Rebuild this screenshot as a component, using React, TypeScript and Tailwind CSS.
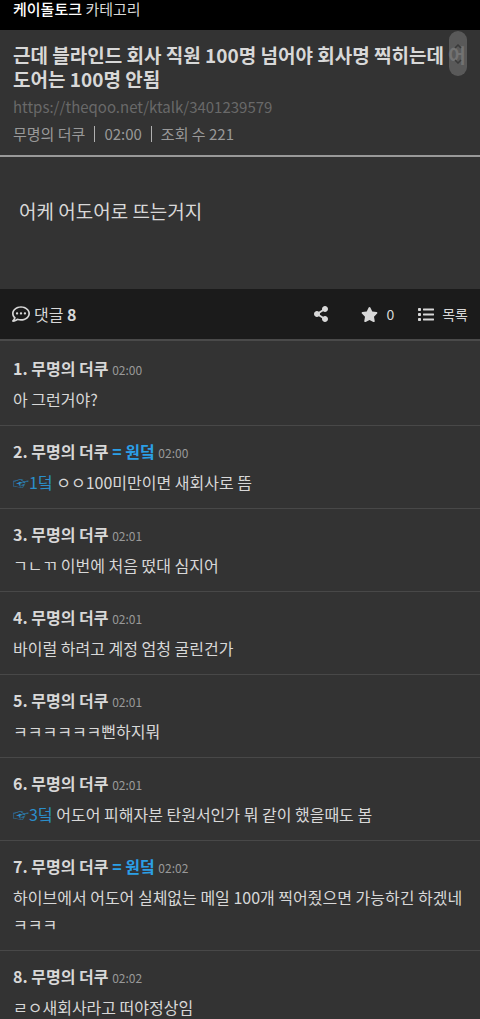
import { FaRegCommentDots, FaShareAlt, FaStar } from 'react-icons/fa';

interface Comment {
  id: number;
  time: string;
  text: string;
  isOp?: boolean;
  replyTo?: number;
}

const comments: Comment[] = [
  { id: 1, time: '02:00', text: '아 그런거야?' },
  { id: 2, time: '02:00', text: 'ㅇㅇ100미만이면 새회사로 뜸', isOp: true, replyTo: 1 },
  { id: 3, time: '02:01', text: 'ㄱㄴㄲ 이번에 처음 떴대 심지어' },
  { id: 4, time: '02:01', text: '바이럴 하려고 계정 엄청 굴린건가' },
  { id: 5, time: '02:01', text: 'ㅋㅋㅋㅋㅋㅋ뻔하지뭐' },
  { id: 6, time: '02:01', text: '어도어 피해자분 탄원서인가 뭐 같이 했을때도 봄', replyTo: 3 },
  { id: 7, time: '02:02', text: '하이브에서 어도어 실체없는 메일 100개 찍어줬으면 가능하긴 하겠네 ㅋㅋㅋ', isOp: true },
  { id: 8, time: '02:02', text: 'ㄹㅇ새회사라고 떠야정상임' },
];

function ListIcon() {
  return (
    <svg viewBox="0 0 16 13" className="h-[13px] w-4" fill="currentColor">
      <rect x="0" y="0" width="3" height="3" rx="0.8" />
      <rect x="0" y="5" width="3" height="3" rx="0.8" />
      <rect x="0" y="10" width="3" height="3" rx="0.8" />
      <rect x="5" y="0.5" width="11" height="2" rx="0.4" />
      <rect x="5" y="5.5" width="11" height="2" rx="0.4" />
      <rect x="5" y="10.5" width="11" height="2" rx="0.4" />
    </svg>
  );
}

function CommentItem({ comment }: { comment: Comment }) {
  return (
    <li
      id={`comment-${comment.id}`}
      className="border-b border-[#484848] py-3 pr-3 pl-[13px] text-base leading-[27px]"
    >
      <div className="mb-1 font-bold">
        {comment.id}. 무명의 더쿠{' '}
        {comment.isOp && <span className="text-[#2b9fe6]">= 원덬 </span>}
        <time className="text-xs leading-none font-normal text-[#999999]">{comment.time}</time>
      </div>
      <p>
        {comment.replyTo && (
          <>
            <a href={`#comment-${comment.replyTo}`} className="text-[#2b8fca]">
              ☞{comment.replyTo}덬
            </a>{' '}
          </>
        )}
        {comment.text}
      </p>
    </li>
  );
}

export default function App() {
  return (
    <div className="min-h-screen bg-[#333333] text-[#d8d8d8] font-['Noto_Sans_CJK_KR',sans-serif]">
      <header className="bg-black pr-3 pb-3 pl-[13px] text-[15px] leading-[18px]">
        <a href="#ktalk">
          <strong className="font-medium text-white">케이돌토크</strong> 카테고리
        </a>
      </header>

      <article>
        <div className="border-b-2 border-[#999999] pt-[13px] pr-3 pb-2 pl-[13px]">
          <h1 className="text-[19px] leading-6 font-bold break-all">
            근데 블라인드 회사 직원 100명 넘어야 회사명 찍히는데 어도어는 100명 안됨
          </h1>
          <a
            href="https://theqoo.net/ktalk/3401239579"
            className="mt-[2px] block text-[15px] leading-[27px] text-[#696969]"
          >
            https://theqoo.net/ktalk/3401239579
          </a>
          <div className="flex items-center text-[15px] leading-[27px] text-[#999999]">
            <span>무명의 더쿠</span>
            <span className="mx-[9px] h-4 w-px bg-[#b0b0b0]" />
            <span>02:00</span>
            <span className="mx-[9px] h-4 w-px bg-[#b0b0b0]" />
            <span>조회 수 221</span>
          </div>
        </div>
        <p className="px-[19px] pt-10 pb-16 text-[19px] leading-7">어케 어도어로 뜨는거지</p>
      </article>

      <div className="flex h-[52px] items-center justify-between border-b-2 border-[#4a4a4a] bg-[#1b1b1b] px-3">
        <h2 className="flex items-center gap-1 text-base">
          <FaRegCommentDots className="size-[18px]" />
          <span>
            댓글 <b className="font-bold">8</b>
          </span>
        </h2>
        <div className="flex items-center text-sm">
          <button type="button" aria-label="공유" className="mr-8">
            <FaShareAlt className="size-4" />
          </button>
          <button type="button" aria-label="스크랩" className="mr-6 flex items-center gap-2">
            <FaStar className="size-[17px]" />0
          </button>
          <a href="#list" className="flex items-center gap-2">
            <ListIcon />
            목록
          </a>
        </div>
      </div>

      <ul className="pt-[2px]">
        {comments.map((comment) => (
          <CommentItem key={comment.id} comment={comment} />
        ))}
      </ul>

      {/* floating scroll handle */}
      <div className="fixed top-[31px] right-[13px] flex h-[45px] w-[18px] items-center justify-center rounded-full bg-[#606060]/85">
        <svg viewBox="0 0 8 20" className="h-5 w-2" fill="none" stroke="#3a3a3a" strokeWidth="1.5">
          <path d="M1 4l3-3 3 3M1 16l3 3 3-3" />
        </svg>
      </div>
    </div>
  );
}
